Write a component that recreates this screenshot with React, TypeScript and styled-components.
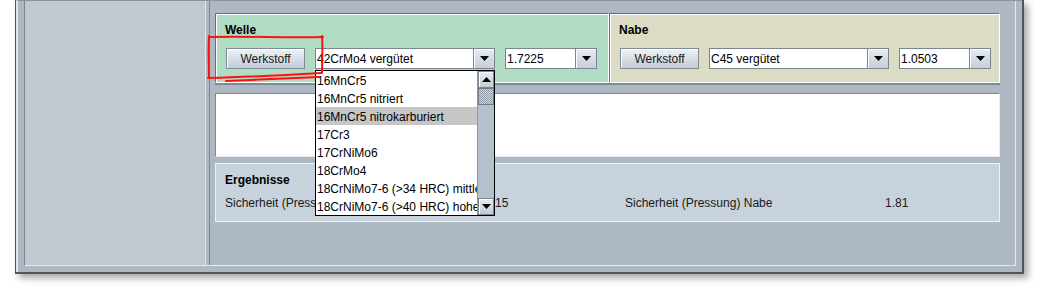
import React from "react";
import styled, { createGlobalStyle } from "styled-components";

const Global = createGlobalStyle`
  html, body { margin: 0; padding: 0; background: #ffffff; }
  body { font-family: "Liberation Sans", Arial, sans-serif; font-size: 12px; color: #000; }
  * { box-sizing: border-box; }
`;

const Page = styled.div`
  width: 1040px;
  height: 290px;
  overflow: hidden;
  padding-left: 15px;
`;

const Window = styled.div`
  width: 1009px;
  height: 274px;
  display: flex;
  border-left: 1px solid #50565c;
  border-right: 2px solid #50565c;
  border-bottom: 2px solid #50565c;
  box-shadow: 4px 4px 7px rgba(0, 0, 0, 0.35);
`;

const Frame = styled.div`
  flex: 1;
  display: flex;
  background: #adb8c2;
  border-top: 1px solid #8a949e;
  border-left: 2px solid #dfe4e9;
  padding: 0 6px 6px 6px;
`;

const Inner = styled.div`
  flex: 1;
  display: flex;
  border-left: 1px solid #7d8791;
  border-right: 1px solid #e6eaee;
  border-bottom: 1px solid #e6eaee;
`;

const SidePanel = styled.div`
  width: 181px;
  background: #c0c8d0;
  border-right: 1px solid #e2e6ea;
  margin-right: 3px;
`;

const Content = styled.div`
  flex: 1;
  display: flex;
  flex-direction: column;
  border-left: 1px solid #7d8791;
  padding: 12px 15px 0 5px;
`;

const TopRow = styled.div`
  display: grid;
  grid-template-columns: 394px 1fr;
  border-bottom: 2px solid #7f8993;
`;

const Group = styled.div<{ $bg: string }>`
  position: relative;
  height: 70px;
  background: ${(p) => p.$bg};
  border-top: 1px solid #66707a;
  border-left: 1px solid #66707a;
  border-right: 1px solid #ffffff;
  border-bottom: 1px solid #ffffff;
  box-shadow: inset 1px 1px 0 #ffffff;
  padding: 8px 0 0 9px;
`;

const Title = styled.div`
  font-weight: bold;
  line-height: 14px;
  height: 14px;
  padding-top: 1px;
`;

const Row = styled.div`
  display: flex;
  align-items: center;
  gap: 10px;
  margin: 12px 0 0 1px;
`;

const Button = styled.div`
  width: 79px;
  height: 21px;
  display: flex;
  align-items: center;
  justify-content: center;
  padding-top: 1px;
  border: 1px solid #7f8a95;
  background: linear-gradient(#eef2f6, #d6dde4 55%, #c2ccd6);
  box-shadow: inset 1px 1px 0 #ffffff;
  color: #1a1a1a;
`;

const Combo = styled.div<{ $w: number }>`
  position: relative;
  width: ${(p) => p.$w}px;
  height: 21px;
  display: flex;
`;

const Field = styled.div`
  flex: 1;
  background: #ffffff;
  border: 1px solid #7a8590;
  padding: 1px 0 0 1px;
  line-height: 18px;
  white-space: nowrap;
  overflow: hidden;
`;

const ArrowBtn = styled.div<{ $w?: number }>`
  width: ${(p) => p.$w ?? 21}px;
  display: flex;
  align-items: center;
  justify-content: center;
  border: 1px solid #7a8590;
  border-left: none;
  background: linear-gradient(#e6ebf0, #c6cfd8);
  box-shadow: inset 1px 1px 0 #ffffff;
`;

const Popup = styled.div`
  position: absolute;
  left: 0;
  top: 22px;
  width: 180px;
  height: 146px;
  border: 1px solid #000;
  background: #fff;
  display: flex;
  z-index: 5;
`;

const List = styled.div`
  flex: 1;
  overflow: hidden;
`;

const Item = styled.div<{ $sel?: boolean }>`
  height: 18px;
  line-height: 18px;
  padding: 1px 0 0 1px;
  white-space: nowrap;
  overflow: hidden;
  background: ${(p) => (p.$sel ? "#c6c6c6" : "transparent")};
`;

const ScrollBar = styled.div`
  width: 17px;
  display: flex;
  flex-direction: column;
  background: #b4c0cc;
  border-left: 1px solid #8d98a3;
`;

const ScrollBtn = styled.div`
  height: 17px;
  display: flex;
  align-items: center;
  justify-content: center;
  border: 1px solid #7a8590;
  background: linear-gradient(#e6ebf0, #c2cbd4);
  box-shadow: inset 1px 1px 0 #ffffff;
`;

const Thumb = styled.div`
  height: 17px;
  border: 1px solid #6f7b87;
  background: repeating-conic-gradient(#d0d7de 0 25%, #8e9aa6 0 50%) 0 0 / 2px 2px;
`;

const Track = styled.div`
  flex: 1;
`;

const Blank = styled.div`
  height: 64px;
  margin-top: 8px;
  background: #ffffff;
  border-top: 1px solid #7d8791;
  border-left: 1px solid #7d8791;
  border-right: 1px solid #e8ecf0;
  border-bottom: 1px solid #e8ecf0;
`;

const Results = styled.div`
  height: 59px;
  margin-top: 6px;
  background: #c8d2dc;
  border: 1px solid #eef1f4;
  padding: 8px 0 0 9px;
`;

const ResultGrid = styled.div`
  display: grid;
  grid-template-columns: 260px 140px 260px auto;
  margin-top: 10px;
  line-height: 14px;
  color: #1a1a1a;
`;

const Mark = styled.svg`
  position: absolute;
  left: -10px;
  top: 20px;
  overflow: visible;
  z-index: 6;
  pointer-events: none;
`;

const Down = ({ w = 9, h = 5 }: { w?: number; h?: number }) => (
  <svg width={w} height={h} viewBox={`0 0 ${w} ${h}`}>
    <polygon points={`0,0 ${w},0 ${w / 2},${h}`} fill="#000" />
  </svg>
);

const Up = ({ w = 9, h = 5 }: { w?: number; h?: number }) => (
  <svg width={w} height={h} viewBox={`0 0 ${w} ${h}`}>
    <polygon points={`0,${h} ${w},${h} ${w / 2},0`} fill="#000" />
  </svg>
);

const items = [
  "16MnCr5",
  "16MnCr5 nitriert",
  "16MnCr5 nitrokarburiert",
  "17Cr3",
  "17CrNiMo6",
  "18CrMo4",
  "18CrNiMo7-6 (>34 HRC) mittlere",
  "18CrNiMo7-6 (>40 HRC) hohe",
];

export default function App() {
  return (
    <>
      <Global />
      <Page>
        <Window>
          <Frame>
            <Inner>
              <SidePanel />
              <Content>
                <TopRow>
                  <Group $bg="#b0dcc4">
                    <Title>Welle</Title>
                    <Row>
                      <Button>Werkstoff</Button>
                      <Combo $w={180}>
                        <Field>42CrMo4 vergütet</Field>
                        <ArrowBtn>
                          <Down />
                        </ArrowBtn>
                        <Popup>
                          <List>
                            {items.map((t, i) => (
                              <Item key={t} $sel={i === 2}>
                                {t}
                              </Item>
                            ))}
                          </List>
                          <ScrollBar>
                            <ScrollBtn>
                              <Up w={9} h={5} />
                            </ScrollBtn>
                            <Thumb />
                            <Track />
                            <ScrollBtn>
                              <Down w={9} h={5} />
                            </ScrollBtn>
                          </ScrollBar>
                        </Popup>
                      </Combo>
                      <Combo $w={92}>
                        <Field>1.7225</Field>
                        <ArrowBtn>
                          <Down />
                        </ArrowBtn>
                      </Combo>
                    </Row>
                    <Mark width="125" height="52" viewBox="0 0 125 52">
                      <g fill="none" stroke="#ff1010" strokeWidth="2" strokeLinecap="round" strokeLinejoin="round">
                        <path d="M3,3 C40,2 80,4 117,3" />
                        <path d="M3,2 C2,16 3,30 3,44" />
                        <path d="M116,2 C117,15 116,28 116,39" />
                        <path d="M2,44 C40,43 80,41 115,39" />
                        <path d="M20,47 C50,46 85,44 113,43" />
                      </g>
                    </Mark>
                  </Group>
                  <Group $bg="#dcdcc4">
                    <Title>Nabe</Title>
                    <Row>
                      <Button>Werkstoff</Button>
                      <Combo $w={180}>
                        <Field>C45 vergütet</Field>
                        <ArrowBtn>
                          <Down />
                        </ArrowBtn>
                      </Combo>
                      <Combo $w={92}>
                        <Field>1.0503</Field>
                        <ArrowBtn>
                          <Down />
                        </ArrowBtn>
                      </Combo>
                    </Row>
                  </Group>
                </TopRow>
                <Blank />
                <Results>
                  <Title>Ergebnisse</Title>
                  <ResultGrid>
                    <span>Sicherheit (Pressung) Welle</span>
                    <span>1.15</span>
                    <span>Sicherheit (Pressung) Nabe</span>
                    <span>1.81</span>
                  </ResultGrid>
                </Results>
              </Content>
            </Inner>
          </Frame>
        </Window>
      </Page>
    </>
  );
}
